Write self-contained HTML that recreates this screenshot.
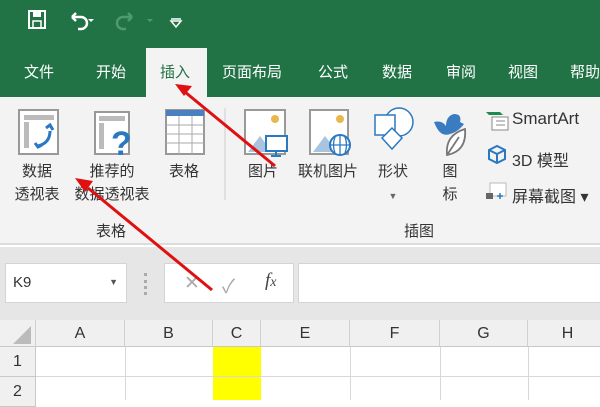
<!DOCTYPE html>
<html><head><meta charset="utf-8"><style>
*{margin:0;padding:0;box-sizing:border-box}
body{width:600px;height:400px;overflow:hidden;position:relative;background:#fff;font-family:"Liberation Sans","Noto Sans CJK SC",sans-serif}
.a{position:absolute}
.green{left:0;top:0;width:600px;height:97px;background:#217346}
.tab{top:61px;color:#fff;font-size:15px}
.rib{left:0;top:97px;width:600px;height:148px;background:#f3f3f3;border-bottom:2px solid #dcdcdc}
.lbl{font-size:15px;color:#333;text-align:center;line-height:23px}
.fb{left:0;top:247px;width:600px;height:73px;background:#e6e6e6}
.box{background:#fff;border:1px solid #d4d4d4}
.ch{top:320px;height:27px;background:#f0f0f0;border-right:1px solid #d0d0d0;border-bottom:1px solid #c8c8c8;text-align:center;font-size:16px;line-height:27px;color:#333}
.rh{left:0;width:36px;background:#f0f0f0;border-bottom:1px solid #c8c8c8;border-right:1px solid #c8c8c8;font-size:16px;color:#333;text-align:center}
.vl{top:347px;width:1px;height:53px;background:#d8d8d8}
</style></head><body>
<div class="a green"></div>
<svg class="a" style="left:26px;top:8px" width="160" height="26" viewBox="0 0 160 26">
<rect x="3" y="3" width="16" height="17" fill="none" stroke="#fff" stroke-width="2"/><rect x="7" y="3" width="8" height="6" fill="#fff"/><rect x="7" y="13" width="8" height="7" fill="none" stroke="#fff" stroke-width="1.5"/>
<path d="M46 9 h9 a6 6 0 0 1 0 12 h-3 M46 9 l4 -4 M46 9 l4 4" fill="none" stroke="#fff" stroke-width="2.5"/>
<path d="M62 11 l3 3 l3 -3z" fill="#fff"/>
<path d="M106 9 h-9 a6 6 0 0 0 0 12 h3 M106 9 l-4 -4 M106 9 l-4 4" fill="none" stroke="#4e9a6c" stroke-width="2.5"/>
<path d="M121 11 l3 3 l3 -3z" fill="#4e9a6c"/>
<path d="M145 13 h10 l-5 6z M145 11 h10" fill="none" stroke="#fff" stroke-width="1.5"/>
</svg>
<div class="a" style="left:146px;top:48px;width:61px;height:51px;background:#f3f3f3"></div>
<div class="a tab" style="left:24px">文件</div>
<div class="a tab" style="left:96px">开始</div>
<div class="a tab" style="left:160px;color:#217346">插入</div>
<div class="a tab" style="left:222px">页面布局</div>
<div class="a tab" style="left:318px">公式</div>
<div class="a tab" style="left:382px">数据</div>
<div class="a tab" style="left:446px">审阅</div>
<div class="a tab" style="left:508px">视图</div>
<div class="a tab" style="left:570px">帮助</div>
<div class="a rib"></div>
<svg class="a" style="left:0;top:100px" width="600" height="100">
<rect x="19" y="10" width="39" height="44" fill="#fff" stroke="#999" stroke-width="2"/><rect x="24" y="15" width="30" height="5" fill="#bbb"/><rect x="24" y="22" width="5" height="26" fill="#bbb"/>
<path d="M38 46 q12 -3 12 -15 M46 28 l4 -3 l3 5 M35 43 l3 4 l4 -2" fill="none" stroke="#2b78c2" stroke-width="3"/>
<rect x="95" y="12" width="34" height="42" fill="#fff" stroke="#999" stroke-width="2"/><rect x="99" y="16" width="26" height="5" fill="#bbb"/><rect x="99" y="23" width="5" height="26" fill="#bbb"/>
<text x="111" y="55" font-size="34" font-weight="bold" fill="#2b78c2" font-family="Liberation Sans">?</text>
<rect x="166" y="10" width="38" height="44" fill="#fff" stroke="#999" stroke-width="2"/><rect x="166" y="10" width="38" height="6" fill="#4a80c0"/>
<path d="M166 25 h38 M166 34 h38 M166 43 h38 M179 16 v38 M192 16 v38" stroke="#aaa"/>
<line x1="225" y1="8" x2="225" y2="140" stroke="#ccc"/>
<rect x="245" y="10" width="40" height="44" fill="#fff" stroke="#999" stroke-width="2"/><circle cx="275" cy="19" r="4" fill="#e8b84a"/><path d="M248 52 l12 -16 l12 16z" fill="#a9c4df"/>
<rect x="266" y="36" width="21" height="15" fill="#fff" stroke="#2b78c2" stroke-width="2"/><path d="M276 51 v5 M271 56 h10" stroke="#2b78c2" stroke-width="2"/>
<rect x="310" y="10" width="38" height="44" fill="#fff" stroke="#999" stroke-width="2"/><circle cx="340" cy="19" r="4" fill="#e8b84a"/><path d="M313 52 l12 -16 l12 16z" fill="#a9c4df"/>
<circle cx="340" cy="45" r="10" fill="#fff" stroke="#2b78c2" stroke-width="2"/><path d="M330 45 h20 M340 35 v20 M335 37 q-3 8 0 16 M345 37 q3 8 0 16" fill="none" stroke="#2b78c2" stroke-width="1.3"/>
<circle cx="399" cy="22" r="14" fill="#fff" stroke="#2b78c2" stroke-width="1.5"/><rect x="375" y="15" width="20" height="20" fill="#fff" stroke="#2b78c2" stroke-width="1.5"/>
<path d="M392 28 l10 10 l-10 11 l-10 -11z" fill="#fff" stroke="#2b78c2" stroke-width="1.5"/>
<path d="M434 22 q8 -2 12 4 q0 -10 8 -12 q8 0 6 8 l4 2 q-6 8 -14 10 q-10 4 -16 -12z" fill="#3a7cc0"/>
<path d="M447 55 q-2 -20 18 -26 q2 22 -18 26z M447 55 l12 -18" fill="#fff" stroke="#777" stroke-width="1.8"/>
<path d="M486 12 h14 l3 3 h-14z" fill="#1f8a4c"/><rect x="492" y="17" width="16" height="13" fill="#fff" stroke="#888"/><path d="M496 21 h9 M496 25 h9" stroke="#888"/>
<path d="M489 50 l8 -4 l8 4 v9 l-8 4 l-8 -4z M489 50 l8 4 l8 -4 M497 54 v9" fill="none" stroke="#2b78c2" stroke-width="2"/>
<rect x="490" y="83" width="16" height="13" fill="#fff" stroke="#bbb"/><rect x="486" y="93" width="7" height="6" fill="#666"/><path d="M497 96 h6 M500 93 v6" stroke="#2b78c2" stroke-width="1.5"/>
</svg>
<div class="a" style="left:512px;top:109px;font-size:17px;color:#333">SmartArt</div>
<div class="a" style="left:512px;top:147px;font-size:16px;color:#333">3D 模型</div>
<div class="a" style="left:512px;top:183px;font-size:16px;color:#333">屏幕截图 ▾</div>
<div class="a lbl" style="left:6px;top:160px;width:62px">数据<br>透视表</div>
<div class="a lbl" style="left:66px;top:160px;width:92px">推荐的<br>数据透视表</div>
<div class="a lbl" style="left:162px;top:160px;width:44px">表格</div>
<div class="a lbl" style="left:240px;top:160px;width:46px">图片</div>
<div class="a lbl" style="left:290px;top:160px;width:76px">联机图片</div>
<div class="a lbl" style="left:370px;top:160px;width:46px">形状<br><span style="font-size:9px;color:#666">▼</span></div>
<div class="a lbl" style="left:430px;top:160px;width:40px">图<br>标</div>
<div class="a lbl" style="left:88px;top:220px;width:46px">表格</div>
<div class="a lbl" style="left:396px;top:220px;width:46px">插图</div>
<div class="a fb"></div>
<div class="a box" style="left:5px;top:263px;width:122px;height:40px;font-size:15px;padding:10px 7px;color:#333">K9<span style="position:absolute;right:8px;top:13px;font-size:9px;color:#555">▼</span></div>
<div class="a" style="left:144px;top:273px;width:3px;height:22px;border-left:3px dotted #aaa"></div>
<div class="a box" style="left:164px;top:263px;width:130px;height:40px;font-size:19px;color:#aaa"><span style="position:absolute;left:19px;top:8px">✕</span><span style="position:absolute;left:57px;top:8px">✓</span><span style="position:absolute;left:100px;top:6px;color:#444;font-family:'Liberation Serif',serif;font-style:italic">f<span style="font-size:14px">x</span></span></div>
<div class="a box" style="left:298px;top:263px;width:310px;height:40px"></div>
<div class="a ch" style="left:0;width:36px;background:#f0f0f0"><svg width="30" height="27"><path d="M28 6 v18 h-18z" fill="#bbb"/></svg></div>
<div class="a ch" style="left:36px;width:89px">A</div>
<div class="a ch" style="left:125px;width:88px">B</div>
<div class="a ch" style="left:213px;width:48px">C</div>
<div class="a ch" style="left:261px;width:89px">E</div>
<div class="a ch" style="left:350px;width:90px">F</div>
<div class="a ch" style="left:440px;width:88px">G</div>
<div class="a ch" style="left:528px;width:80px">H</div>
<div class="a rh" style="top:347px;height:30px;line-height:30px">1</div>
<div class="a rh" style="top:377px;height:30px;line-height:30px">2</div>
<div class="a" style="left:213px;top:347px;width:48px;height:53px;background:#ff0"></div>
<div class="a" style="left:36px;top:376px;width:564px;height:1px;background:#d8d8d8"></div>
<div class="a vl" style="left:125px"></div><div class="a vl" style="left:350px"></div><div class="a vl" style="left:440px"></div><div class="a vl" style="left:528px"></div>
<svg class="a" style="left:0;top:0" width="600" height="400">
<line x1="275" y1="166" x2="185" y2="92" stroke="#e01010" stroke-width="3"/>
<path d="M175 84 l17 2 l-8 10z" fill="#e01010"/>
<line x1="212" y1="290" x2="88" y2="188" stroke="#e01010" stroke-width="3"/>
<path d="M75 178 l18 3 l-8 11z" fill="#e01010"/>
</svg>
</body></html>
